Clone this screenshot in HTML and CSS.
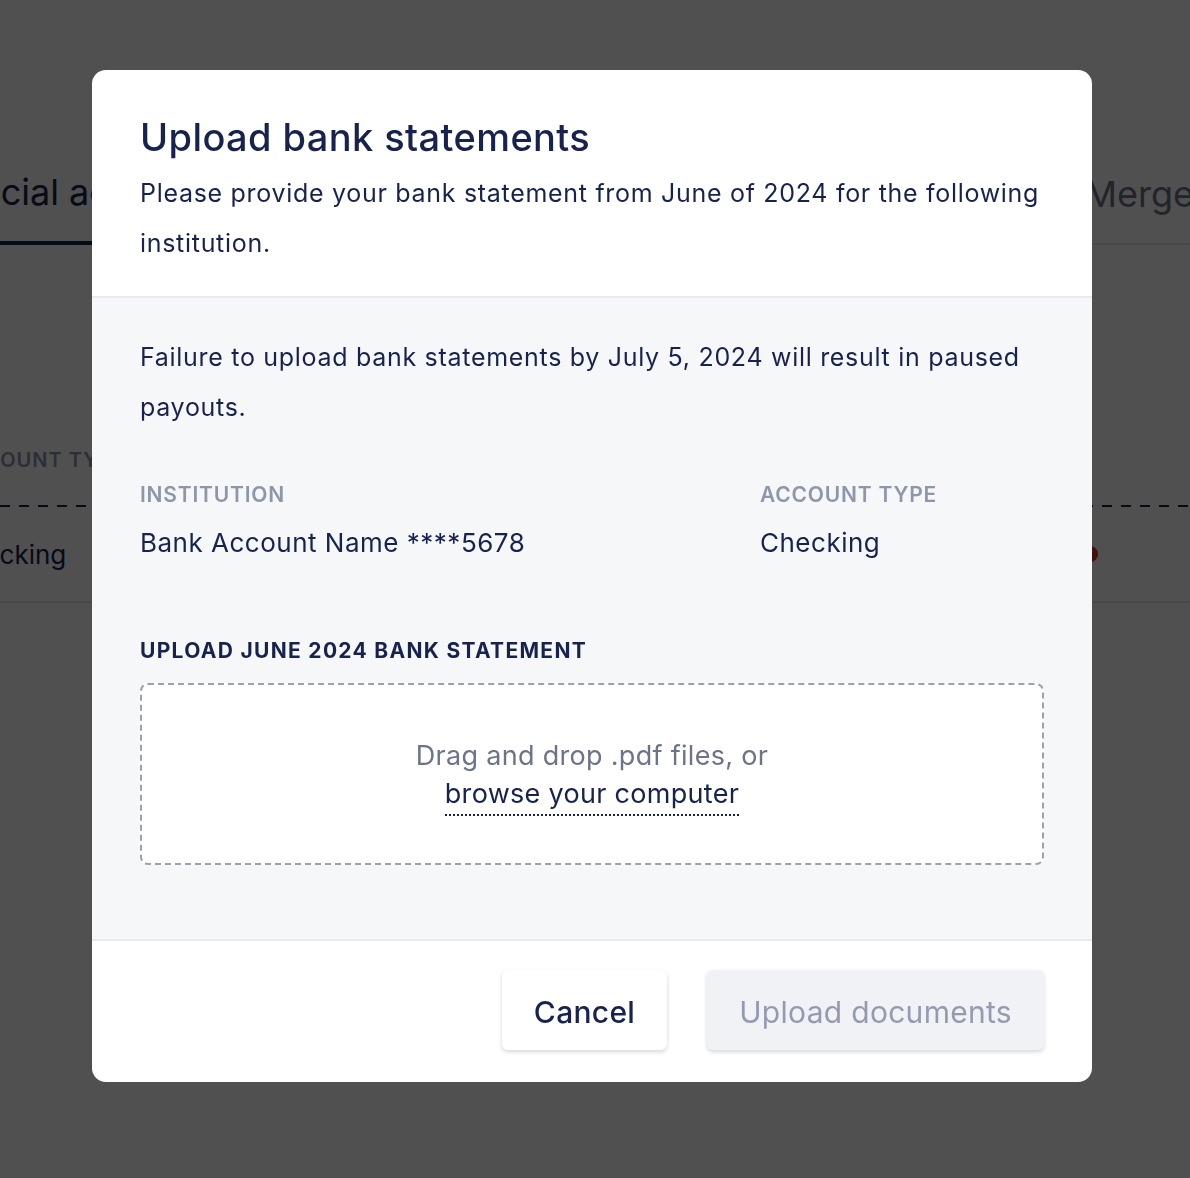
FILE: index.html
```html
<!DOCTYPE html>
<html>
<head>
    <title>Upload bank statements</title>
    <link rel="stylesheet" href="styles.css">
</head>
<body>
    <!-- page behind the modal -->
    <div class="page">
        <div class="tabs">
            <div class="tab active">Financial accounts</div>
            <div class="tab-spacer"></div>
            <div class="tab">Merge accounts</div>
        </div>
        <div class="table">
            <div class="table-head">
                <span class="th">ACCOUNT TYPE</span>
            </div>
            <div class="table-row">
                <span class="td">Checking</span>
                <span class="status-dot"></span>
            </div>
        </div>
    </div>

    <div class="overlay">
        <div class="modal">
            <div class="modal-header">
                <h2 class="modal-title">Upload bank statements</h2>
                <p class="modal-text">Please provide your bank statement from June of 2024 for the following institution.</p>
            </div>

            <div class="modal-body">
                <p class="modal-text">Failure to upload bank statements by July 5, 2024 will result in paused payouts.</p>

                <div class="details">
                    <div class="detail">
                        <div class="detail-label">INSTITUTION</div>
                        <div class="detail-value">Bank Account Name ****5678</div>
                    </div>
                    <div class="detail">
                        <div class="detail-label">ACCOUNT TYPE</div>
                        <div class="detail-value">Checking</div>
                    </div>
                </div>

                <div class="upload-label">UPLOAD JUNE 2024 BANK STATEMENT</div>
                <div class="dropzone">
                    <span class="drop-hint">Drag and drop .pdf files, or</span>
                    <span class="browse">browse your computer</span>
                </div>
            </div>

            <div class="modal-footer">
                <button class="btn btn-cancel">Cancel</button>
                <button class="btn btn-upload" disabled>Upload documents</button>
            </div>
        </div>
    </div>
</body>
</html>
```

FILE: styles.css
```css
/* base */
body {
    margin: 0;
    font-family: Inter, 'Noto Sans', sans-serif;
    color: #17234e;
    background-color: #fff;
    height: 1178px;
    overflow: hidden;
}

/* page behind */
.page {
    padding-top: 170px;
}
.tabs {
    display: flex;
    align-items: flex-end;
    border-bottom: 2px solid #e6e8ee;
}
.tab {
    font-size: 36px;
    padding-bottom: 27px;
    white-space: nowrap;
}
.tab.active {
    margin-left: -92px;
    border-bottom: 4px solid #17234e;
    margin-bottom: -2px;
    color: #17234e;
}
.tab-spacer {
    flex: 1;
}
.tabs .tab:last-child {
    color: #6d7487;
    margin-right: -170px;
}
.table {
    margin-top: 203px;
}
/* long dashes under the header row */
.table-head {
    padding: 0 0 35px;
    background-image: repeating-linear-gradient(to right, #17234e 0 10px, transparent 10px 19px);
    background-size: 100% 2px;
    background-position: left bottom;
    background-repeat: no-repeat;
}
.th {
    display: inline-block;
    margin-left: -46px;
    font-size: 20px;
    font-weight: 600;
    letter-spacing: 1px;
    color: #8e96aa;
}
.table-row {
    display: flex;
    align-items: center;
    justify-content: space-between;
    height: 94px;
    border-bottom: 2px solid #e6e8ee;
}
.td {
    margin-left: -50px;
    font-size: 26px;
}
.status-dot {
    width: 16px;
    height: 16px;
    border-radius: 50%;
    background-color: #d63a2f;
    margin-right: 92px;
}

/* overlay */
.overlay {
    position: fixed;
    inset: 0;
    background-color: rgba(0, 0, 0, 0.688);
    display: flex;
    justify-content: flex-start;
    align-items: flex-start;
    padding: 70px 0 0 92px;
}

/* modal */
.modal {
    width: 1000px;
    background-color: #fff;
    border-radius: 14px;
    overflow: hidden;
}
.modal-header {
    padding: 42px 48px 28px;
    border-bottom: 2px solid #e8eaef;
}
.modal-title {
    margin: 0 0 6px;
    font-size: 38px;
    font-weight: 500;
    line-height: 50px;
    letter-spacing: 0.4px;
}
.modal-text {
    margin: 0;
    font-size: 25px;
    line-height: 50px;
    letter-spacing: 0.7px;
    color: #17234e;
}
.modal-body {
    background-color: #f6f7f9;
    padding: 34px 48px 74px;
    border-bottom: 2px solid #e8eaef;
}
.details {
    display: grid;
    grid-template-columns: 620px 1fr;
    margin-top: 49px;
}
.detail-label {
    font-size: 21px;
    font-weight: 600;
    color: #8e96aa;
    line-height: 28px;
    letter-spacing: 0.8px;
}
.detail-value {
    font-size: 26px;
    line-height: 36px;
    letter-spacing: 0.5px;
    margin-top: 16px;
}
.upload-label {
    margin-top: 76px;
    font-size: 21px;
    font-weight: 700;
    letter-spacing: 1.3px;
    line-height: 28px;
}
.dropzone {
    margin-top: 18px;
    height: 172px;
    padding-top: 6px;
    background-color: #fff;
    border: 2px dashed #9ba1b1;
    border-radius: 8px;
    display: flex;
    flex-direction: column;
    align-items: center;
    justify-content: center;
    font-size: 27px;
    letter-spacing: 0.3px;
}
.drop-hint {
    color: #6b7489;
    line-height: 36px;
}
.browse {
    color: #17234e;
    border-bottom: 2px dotted #17234e;
    line-height: 40px;
}

/* footer */
.modal-footer {
    display: flex;
    justify-content: flex-end;
    gap: 40px;
    padding: 29px 48px 32px;
}
.btn {
    height: 80px;
    padding: 3px 32px 0;
    font-family: Inter, 'Noto Sans', sans-serif;
    font-size: 30px;
    letter-spacing: 0.3px;
    border: none;
    border-radius: 6px;
    box-shadow: 0 2px 4px rgba(20, 30, 60, 0.18);
}
.btn-cancel {
    background-color: #fff;
    color: #17234e;
    font-weight: 500;
}
.btn-upload {
    background-color: #f1f2f5;
    color: #949bb0;
}
```
